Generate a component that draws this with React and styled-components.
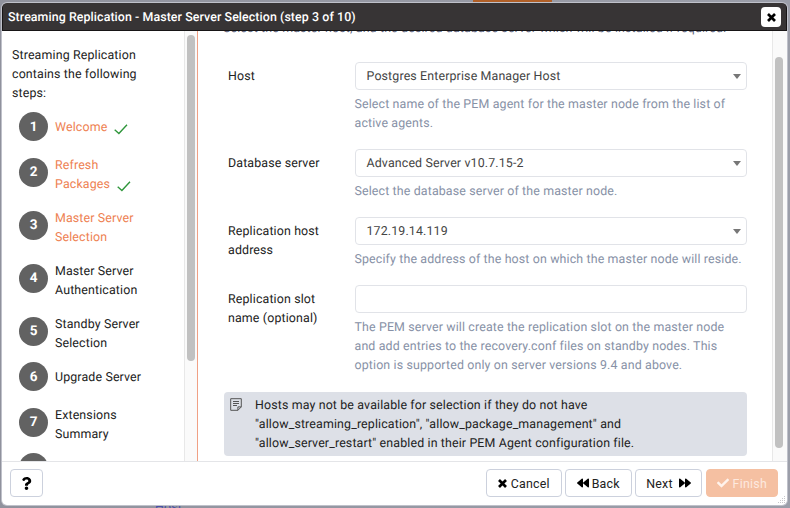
import React from 'react';
import styled, { createGlobalStyle } from 'styled-components';
import { FaBackward, FaForward, FaCheck, FaQuestion } from 'react-icons/fa';

const GlobalStyle = createGlobalStyle`
  *, *::before, *::after { box-sizing: border-box; }
  html, body { margin: 0; padding: 0; overflow: hidden; }
  body { font-family: Roboto, "Liberation Sans", sans-serif; font-size: 12.4px; line-height: 19px; letter-spacing: 0.14px; color: #222; text-rendering: geometricPrecision; }
  p { margin: 0; }
`;

const Backdrop = styled.div`
  position: relative;
  width: 790px;
  height: 508px;
  padding: 3px 4px 4px 2px;
  overflow: hidden;
  background: linear-gradient(90deg, #90929d 0, #9b9ea9 100%);
`;

const ActiveTab = styled.div`
  position: absolute;
  top: 0;
  left: 473px;
  width: 79px;
  height: 2px;
  background: #b05f27;
`;

const PageLink = styled.span`
  position: absolute;
  top: 498px;
  left: 155px;
  color: #4a4fa8;
`;

const Dialog = styled.section`
  position: relative;
  display: flex;
  flex-direction: column;
  width: 785px;
  height: 502px;
  overflow: hidden;
  background: #fff;
  border-radius: 5px;
  box-shadow: 0 0 0 1px #bfc1ca;
`;

const TitleBar = styled.header`
  display: flex;
  flex: 0 0 28px;
  align-items: center;
  justify-content: space-between;
  padding: 1px 5px 0 5px;
  color: #fff;
  background: #373435;
  border: 1px solid #171516;
  border-top: 0;
  border-radius: 4px 4px 0 0;
  font-weight: 500;
  letter-spacing: 0.08px;
`;

const CloseButton = styled.button`
  display: grid;
  place-items: center;
  width: 20px;
  height: 20px;
  padding: 0;
  background: #fff;
  border: 0;
  border-radius: 4px;
`;

const Body = styled.div`
  display: flex;
  flex: 1;
  min-height: 0;
`;

const Sidebar = styled.nav`
  display: flex;
  flex: 0 0 196px;
  overflow: hidden;
  border-right: 1px solid #f0a084;
`;

const Steps = styled.div`
  flex: 1;
  padding: 15px 30px 0 10px;
`;

const StepList = styled.div`
  display: flex;
  flex-direction: column;
  gap: 15px;
  padding: 14.5px 0 0 7px;
`;

const StepRow = styled.div`
  display: flex;
  gap: 7px;
  align-items: ${(p) => (p.$single ? 'center' : 'flex-start')};
  height: ${(p) => (p.$single ? 28 : 38)}px;
  margin-top: ${(p) => (p.$single ? -5 : 0)}px;
  color: ${(p) => (p.$visited ? '#ee8152' : '#222')};
`;

const StepNumber = styled.span`
  display: grid;
  flex: 0 0 29px;
  place-items: center;
  height: 29px;
  padding-top: 1px;
  margin-top: ${(p) => (p.$single ? 0 : 2)}px;
  color: #fff;
  background: #626262;
  border-radius: 50%;
  font-size: 13.5px;
  font-weight: 700;
  letter-spacing: 0;
`;

const StepText = styled.span`
  padding-top: ${(p) => (p.$single ? 1 : 0)}px;
  white-space: pre;
`;

const Tick = styled.svg`
  margin-left: 7px;
  vertical-align: -4px;
`;

const Track = styled.div`
  flex: 0 0 ${(p) => p.$width}px;
  padding: ${(p) => p.$offset}px 0 0 2px;
  background: #fafafa;
  border-left: 1px solid #e8e8e8;
`;

const Thumb = styled.div`
  width: 8px;
  height: ${(p) => p.$length}px;
  background: #c1c1c1;
  border-radius: 4px;
`;

const Content = styled.main`
  display: flex;
  flex: 1;
  overflow: hidden;
`;

const Form = styled.div`
  flex: 1;
  padding: 0 25px 0 26px;
`;

const Intro = styled.p`
  display: flow-root;
  height: 31px;
  margin-left: -1px;
  color: #5f6780;
  white-space: nowrap;
`;

const IntroText = styled.span`
  display: block;
  margin-top: -12px;
`;

const Field = styled.div`
  display: grid;
  grid-template-columns: 126.5px 392.5px;
  padding-left: 4px;
  margin-bottom: 16px;
`;

const Label = styled.label`
  padding-top: 5px;
  white-space: pre;
`;

const Control = styled.div`
  display: flex;
  align-items: center;
  justify-content: space-between;
  height: 28px;
  padding: 0 5px 0 11px;
  color: #444;
  border: 1px solid #e1e3e8;
  border-radius: 4px;
`;

const Caret = styled.span`
  border: 4px solid transparent;
  border-top: 5px solid #777;
  border-bottom: 0;
`;

const Help = styled.p`
  margin-top: 5px;
  color: #8791a6;
  white-space: pre;
`;

const Note = styled.aside`
  display: flex;
  gap: 13px;
  height: 64px;
  padding: 4px 6px;
  margin-top: 17px;
  background: #dde0e7;
  border-radius: 4px;
  white-space: pre;
`;

const NoteIcon = styled.svg`
  flex: none;
  margin-top: 2px;
`;

const Footer = styled.footer`
  display: flex;
  flex: 0 0 44px;
  gap: 3.5px;
  align-items: flex-start;
  padding: 7px 9px 0 8px;
  border-top: 1px solid #e4e5e8;
`;

const Button = styled.button`
  display: flex;
  gap: ${(p) => p.$gap || 4}px;
  align-items: center;
  justify-content: center;
  width: ${(p) => p.$width}px;
  height: 28px;
  padding: 0;
  margin-right: ${(p) => (p.$push ? 'auto' : 0)};
  color: ${(p) => (p.$primary ? '#fde9df' : '#222')};
  background: ${(p) => (p.$primary ? '#f5c0a2' : '#fff')};
  border: 1px solid ${(p) => (p.$primary ? '#f5c0a2' : '#ccd1dd')};
  border-radius: 4px;
  font: inherit;
  letter-spacing: 0.25px;
  svg { color: ${(p) => (p.$primary ? '#fff3ec' : '#000')}; }
`;

const ResizeGrip = styled.svg`
  position: absolute;
  right: 1px;
  bottom: 1px;
`;

const steps = [
  { text: 'Welcome', visited: true, done: true, single: true },
  { text: 'Refresh\nPackages', visited: true, done: true },
  { text: 'Master Server\nSelection', visited: true },
  { text: 'Master Server\nAuthentication' },
  { text: 'Standby Server\nSelection' },
  { text: 'Upgrade Server', single: true },
  { text: 'Extensions\nSummary' },
  { text: '', single: true },
];

const fields = [
  { label: 'Host', value: 'Postgres Enterprise Manager Host', help: 'Select name of the PEM agent for the master node from the list of\nactive agents.', select: true },
  { label: 'Database server', value: 'Advanced Server v10.7.15-2', help: 'Select the database server of the master node.', select: true },
  { label: 'Replication host\naddress', value: '172.19.14.119', help: 'Specify the address of the host on which the master node will reside.', select: true },
  { label: 'Replication slot\nname (optional)', value: '', help: 'The PEM server will create the replication slot on the master node\nand add entries to the recovery.conf files on standby nodes. This\noption is supported only on server versions 9.4 and above.' },
];

const Cross = () => (
  <svg width="9" height="9" viewBox="0 0 9 9" stroke="#000" strokeWidth="2.7">
    <path d="M1 1l7 7M8 1l-7 7" />
  </svg>
);

export default function App() {
  return (
    <Backdrop>
      <GlobalStyle />
      <ActiveTab />
      <PageLink>Host</PageLink>
      <Dialog>
        <TitleBar>
          <span>Streaming Replication - Master Server Selection (step 3 of 10)</span>
          <CloseButton aria-label="Close"><Cross /></CloseButton>
        </TitleBar>
        <Body>
          <Sidebar>
            <Steps>
              <p>Streaming Replication<br />contains the following<br />steps:</p>
              <StepList>
                {steps.map((s, i) => (
                  <StepRow key={i} $single={s.single} $visited={s.visited}>
                    <StepNumber $single={s.single}>{i < 7 ? i + 1 : ''}</StepNumber>
                    <StepText $single={s.single}>
                      {s.text}
                      {s.done && (
                        <Tick width="14" height="11" viewBox="0 0 14 11" fill="none" stroke="#2f963b" strokeWidth="1.4">
                          <path d="M.7 5.8 4.9 9.5 13 .8" />
                        </Tick>
                      )}
                    </StepText>
                  </StepRow>
                ))}
              </StepList>
            </Steps>
            <Track $width={13} $offset={4}><Thumb $length={326} /></Track>
          </Sidebar>
          <Content>
            <Form>
              <Intro><IntroText>Select the master host, and the desired database server which will be installed if required.</IntroText></Intro>
              {fields.map((f) => (
                <Field key={f.label}>
                  <Label>{f.label}</Label>
                  <div>
                    <Control><span>{f.value}</span>{f.select && <Caret />}</Control>
                    <Help>{f.help}</Help>
                  </div>
                </Field>
              ))}
              <Note>
                <NoteIcon width="12" height="13" viewBox="0 0 12 13" fill="none" stroke="#555">
                  <path d="M.7.7h10.6v8.2l-3.4 3.4H.7zM11.3 8.9H7.9v3.4M3 3.5h6M3 5.5h6M3 7.5h4" />
                </NoteIcon>
                <span>{'Hosts may not be available for selection if they do not have\n"allow_streaming_replication", "allow_package_management" and\n"allow_server_restart" enabled in their PEM Agent configuration file.'}</span>
              </Note>
            </Form>
            <Track $width={15} $offset={26}><Thumb $length={391} /></Track>
          </Content>
        </Body>
        <Footer>
          <Button $width={33} $push aria-label="Help"><FaQuestion size={13} /></Button>
          <Button $width={75.5}><Cross />Cancel</Button>
          <Button $width={66.5} $gap={3}><FaBackward size={12} />Back</Button>
          <Button $width={67} $gap={6}>Next<FaForward size={12} /></Button>
          <Button $width={72.5} $primary disabled><FaCheck size={12} />Finish</Button>
        </Footer>
        <ResizeGrip width="8" height="8" fill="#c7c8cb">
          <path d="M6 0h1v1H6zM4 2h1v1H4zM6 2h1v1H6zM2 4h1v1H2zM4 4h1v1H4zM6 4h1v1H6zM0 6h1v1H0zM2 6h1v1H2zM4 6h1v1H4zM6 6h1v1H6z" />
        </ResizeGrip>
      </Dialog>
    </Backdrop>
  );
}
